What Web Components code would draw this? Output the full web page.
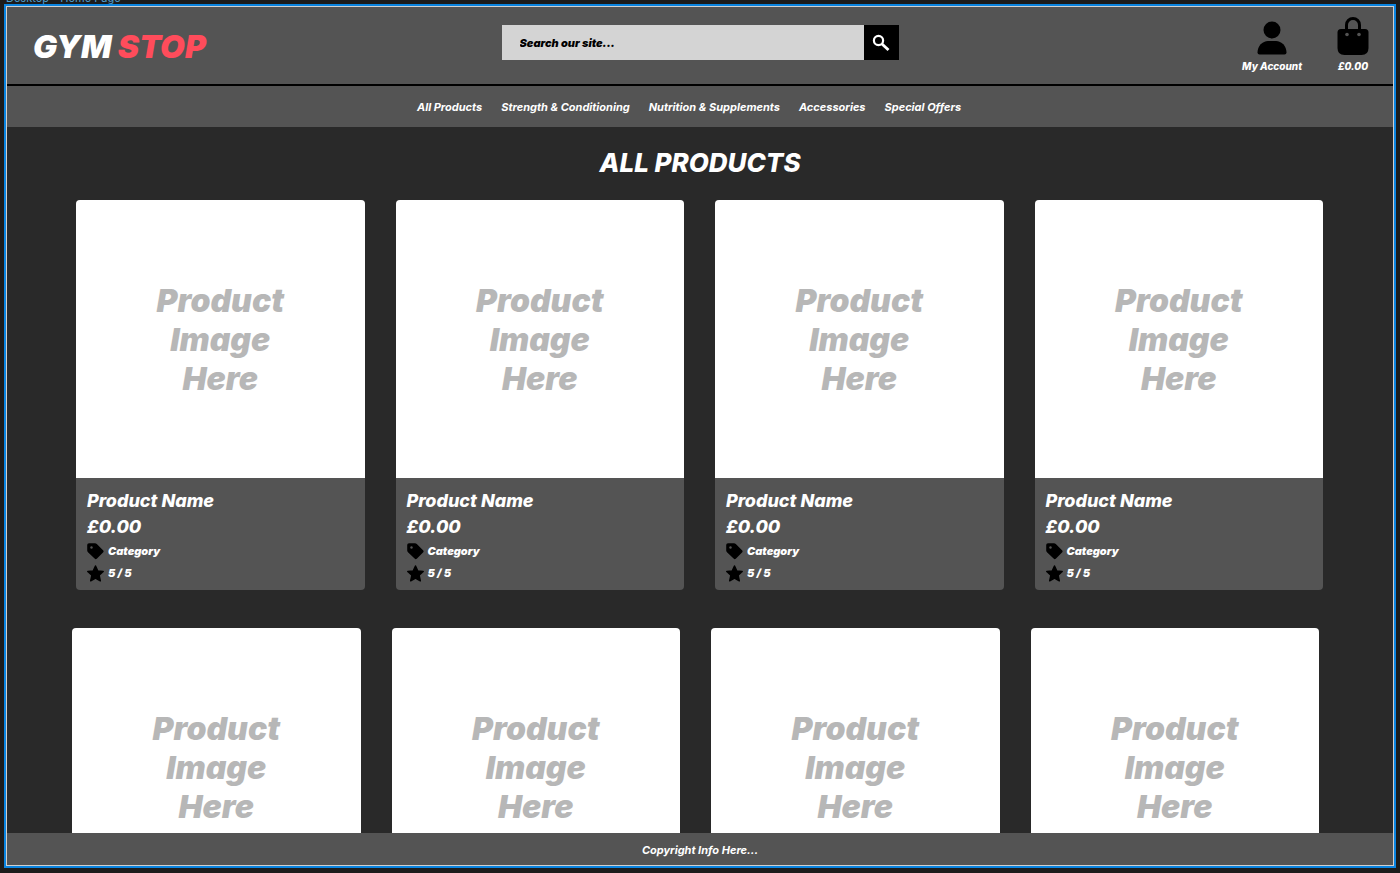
<!DOCTYPE html>
<html lang="en">
<head>
<meta charset="utf-8">
<title>Gym Stop</title>
<style>
  html { background: #1c1c1c; }
  body {
    margin: 0;
    font: italic 900 11px/16px Inter, sans-serif;
    color: #fff;
  }
</style>
</head>
<body>
<gym-canvas label="Desktop - Home Page">
  <gym-header></gym-header>
  <gym-nav></gym-nav>
  <gym-catalogue heading="All Products"></gym-catalogue>
  <gym-footer>Copyright Info Here...</gym-footer>
</gym-canvas>

<script>
const define = (name, html, setup) => {
  const template = document.createElement('template');
  template.innerHTML = html;
  customElements.define(name, class extends HTMLElement {
    constructor() {
      super();
      this.attachShadow({ mode: 'open' }).append(template.content.cloneNode(true));
    }
    connectedCallback() {
      if (setup) setup(this, this.shadowRoot);
    }
  });
};

/* Artboard: selection outline round the page, with its name above it */
define('gym-canvas', `
  <style>
    :host { display: block; box-sizing: border-box; height: 100vh; padding: 4px 4px 5px; position: relative; overflow: hidden; }
    .label { position: absolute; left: 6px; top: -10px; font: 400 11px/16px Inter, sans-serif; color: #4f9fcf; white-space: nowrap; }
    .frame { box-sizing: border-box; height: 100%; border: 2px solid #0a84e0; }
    .page { box-sizing: border-box; height: 100%; border: 1px solid #d0d0d0; background: #292929; display: flex; flex-direction: column; }
  </style>
  <div class="label"></div>
  <div class="frame"><div class="page"><slot></slot></div></div>
`, (host, root) => {
  root.querySelector('.label').textContent = host.getAttribute('label');
});

define('gym-header', `
  <style>
    :host { display: grid; grid-template-columns: 1fr minmax(0, 397px) 1fr; align-items: start; flex: none; box-sizing: border-box; min-height: 79px; background: #545454; border-bottom: 2px solid #000; }
    .logo { padding: 20px 0 0 26px; font-size: 32px; line-height: 39px; color: #fff; text-decoration: none; white-space: nowrap; }
    .logo span { color: #ff4c5b; }
    gym-search { margin-top: 18px; }
    .links { display: flex; justify-content: flex-end; align-items: flex-end; gap: 35px; padding: 10px 24px 0 0; }
  </style>
  <a class="logo" href="#">GYM <span>STOP</span></a>
  <gym-search></gym-search>
  <div class="links">
    <gym-action label="My Account">
      <svg width="30" height="34" viewBox="0 0 30 34"><circle cx="15" cy="9" r="8.500"/><path d="M.5 31.500C.5 25 5.500 20 11 20h8c5.500 0 10.500 5 10.500 11.500q0 2-2 2h-25q-2 0-2-2Z"/></svg>
    </gym-action>
    <gym-action label="£0.00">
      <svg width="32" height="38" viewBox="0 0 32 38"><path fill="none" stroke="#000" stroke-width="3" d="M9.500 14V8a6.500 6.500 0 0 1 13 0v6"/><path d="M4 12h24q3.500 0 3.500 3.500V31q0 7-7 7h-17q-7 0-7-7V15.500Q.5 12 4 12Z"/><circle cx="10" cy="17.500" r="1.800" fill="#545454"/><circle cx="22" cy="17.500" r="1.800" fill="#545454"/></svg>
    </gym-action>
  </div>
`);

define('gym-search', `
  <style>
    :host { display: block; }
    form { display: flex; height: 35px; margin: 0; }
    input { flex: 1; min-width: 0; border: 0; border-radius: 0; margin: 0; padding: 0 18px; background: #d4d4d4; font: inherit; color: #000; outline: 0; }
    input::placeholder { color: #000; opacity: 1; }
    button { width: 35px; border: 0; padding: 0; background: #000; display: grid; place-items: center; }
  </style>
  <form role="search">
    <input type="search" aria-label="Search our site" placeholder="Search our site...">
    <button type="button" aria-label="Search"><svg width="18" height="18" viewBox="0 0 18 18" fill="none" stroke="#fff"><circle cx="6.500" cy="6.500" r="4.600" stroke-width="2.200"/><path d="m10 10 6.500 6" stroke-width="2.800"/></svg></button>
  </form>
`);

define('gym-action', `
  <style>
    :host { display: block; }
    a { display: flex; flex-direction: column; align-items: center; gap: 3px; color: #fff; text-decoration: none; font-size: 10px; font-weight: 800; line-height: 16px; white-space: nowrap; }
  </style>
  <a href="#"><slot></slot><span></span></a>
`, (host, root) => {
  root.querySelector('span').textContent = host.getAttribute('label');
});

define('gym-nav', `
  <style>
    :host { display: block; flex: none; background: #545454; }
    nav { display: flex; justify-content: center; gap: 19px; padding: 13px 22px 12px 0; }
    a { color: #fff; text-decoration: none; font-weight: 700; white-space: nowrap; }
  </style>
  <nav>
    <a href="#">All Products</a>
    <a href="#">Strength &amp; Conditioning</a>
    <a href="#">Nutrition &amp; Supplements</a>
    <a href="#">Accessories</a>
    <a href="#">Special Offers</a>
  </nav>
`);

define('gym-catalogue', `
  <style>
    :host { display: block; flex: 1; min-height: 0; overflow: hidden; }
    h1 { margin: 0; padding: 20px 0 21px; font-size: 26px; line-height: 32px; font-weight: 800; text-align: center; text-transform: uppercase; }
    .row { display: grid; grid-template-columns: repeat(4, minmax(0, 1fr)); gap: 31px; margin-bottom: 38px; padding: 0 70px 0 69px; }
    .row + .row { padding: 0 74px 0 65px; }
  </style>
  <h1></h1>
  <div class="row"><gym-product></gym-product><gym-product></gym-product><gym-product></gym-product><gym-product></gym-product></div>
  <div class="row"><gym-product preview></gym-product><gym-product preview></gym-product><gym-product preview></gym-product><gym-product preview></gym-product></div>
`, (host, root) => {
  root.querySelector('h1').textContent = host.getAttribute('heading');
});

define('gym-product', `
  <style>
    :host { display: block; background: #545454; border-radius: 4px; overflow: hidden; }
    :host([preview]) .info { display: none; }
    .image { display: grid; place-content: center; height: 278px; background: #fff; color: #b7b7b7; font-size: 32px; line-height: 39px; text-align: center; }
    .info { padding: 10px 11px 6px; }
    h2, p { margin: 0; font-size: 18px; line-height: 26px; font-weight: 800; }
    .meta { display: flex; align-items: center; gap: 4px; line-height: 22px; }
    svg { display: block; }
  </style>
  <div class="image">Product<br>Image<br>Here</div>
  <div class="info">
    <h2>Product Name</h2>
    <p>£0.00</p>
    <div class="meta"><svg width="17" height="17" viewBox="0 0 17 17"><path d="M2 .2h6q1 0 1.800.800l6.200 6.200q1.200 1.200 0 2.400l-6 6q-1.200 1.200-2.400 0L1.200 9.400Q.2 8.500.2 7.500V2Q.2.200 2 .2Z"/><circle cx="4.500" cy="4.500" r="1.200" fill="#545454"/></svg>Category</div>
    <div class="meta"><svg width="17" height="17" viewBox="0 0 17 17"><path stroke="#000" stroke-width="1.500" stroke-linejoin="round" d="m8.500 1 2.200 4.900 5.500.500-4.100 3.800 1.200 5.600-4.800-2.700-4.800 2.700 1.200-5.600L.8 6.400l5.500-.5Z"/></svg>5 / 5</div>
  </div>
`);

define('gym-footer', `
  <style>
    :host { display: block; flex: none; background: #545454; }
    footer { padding: 9px 0 7px; text-align: center; font-weight: 700; }
  </style>
  <footer><slot></slot></footer>
`);
</script>
</body>
</html>
